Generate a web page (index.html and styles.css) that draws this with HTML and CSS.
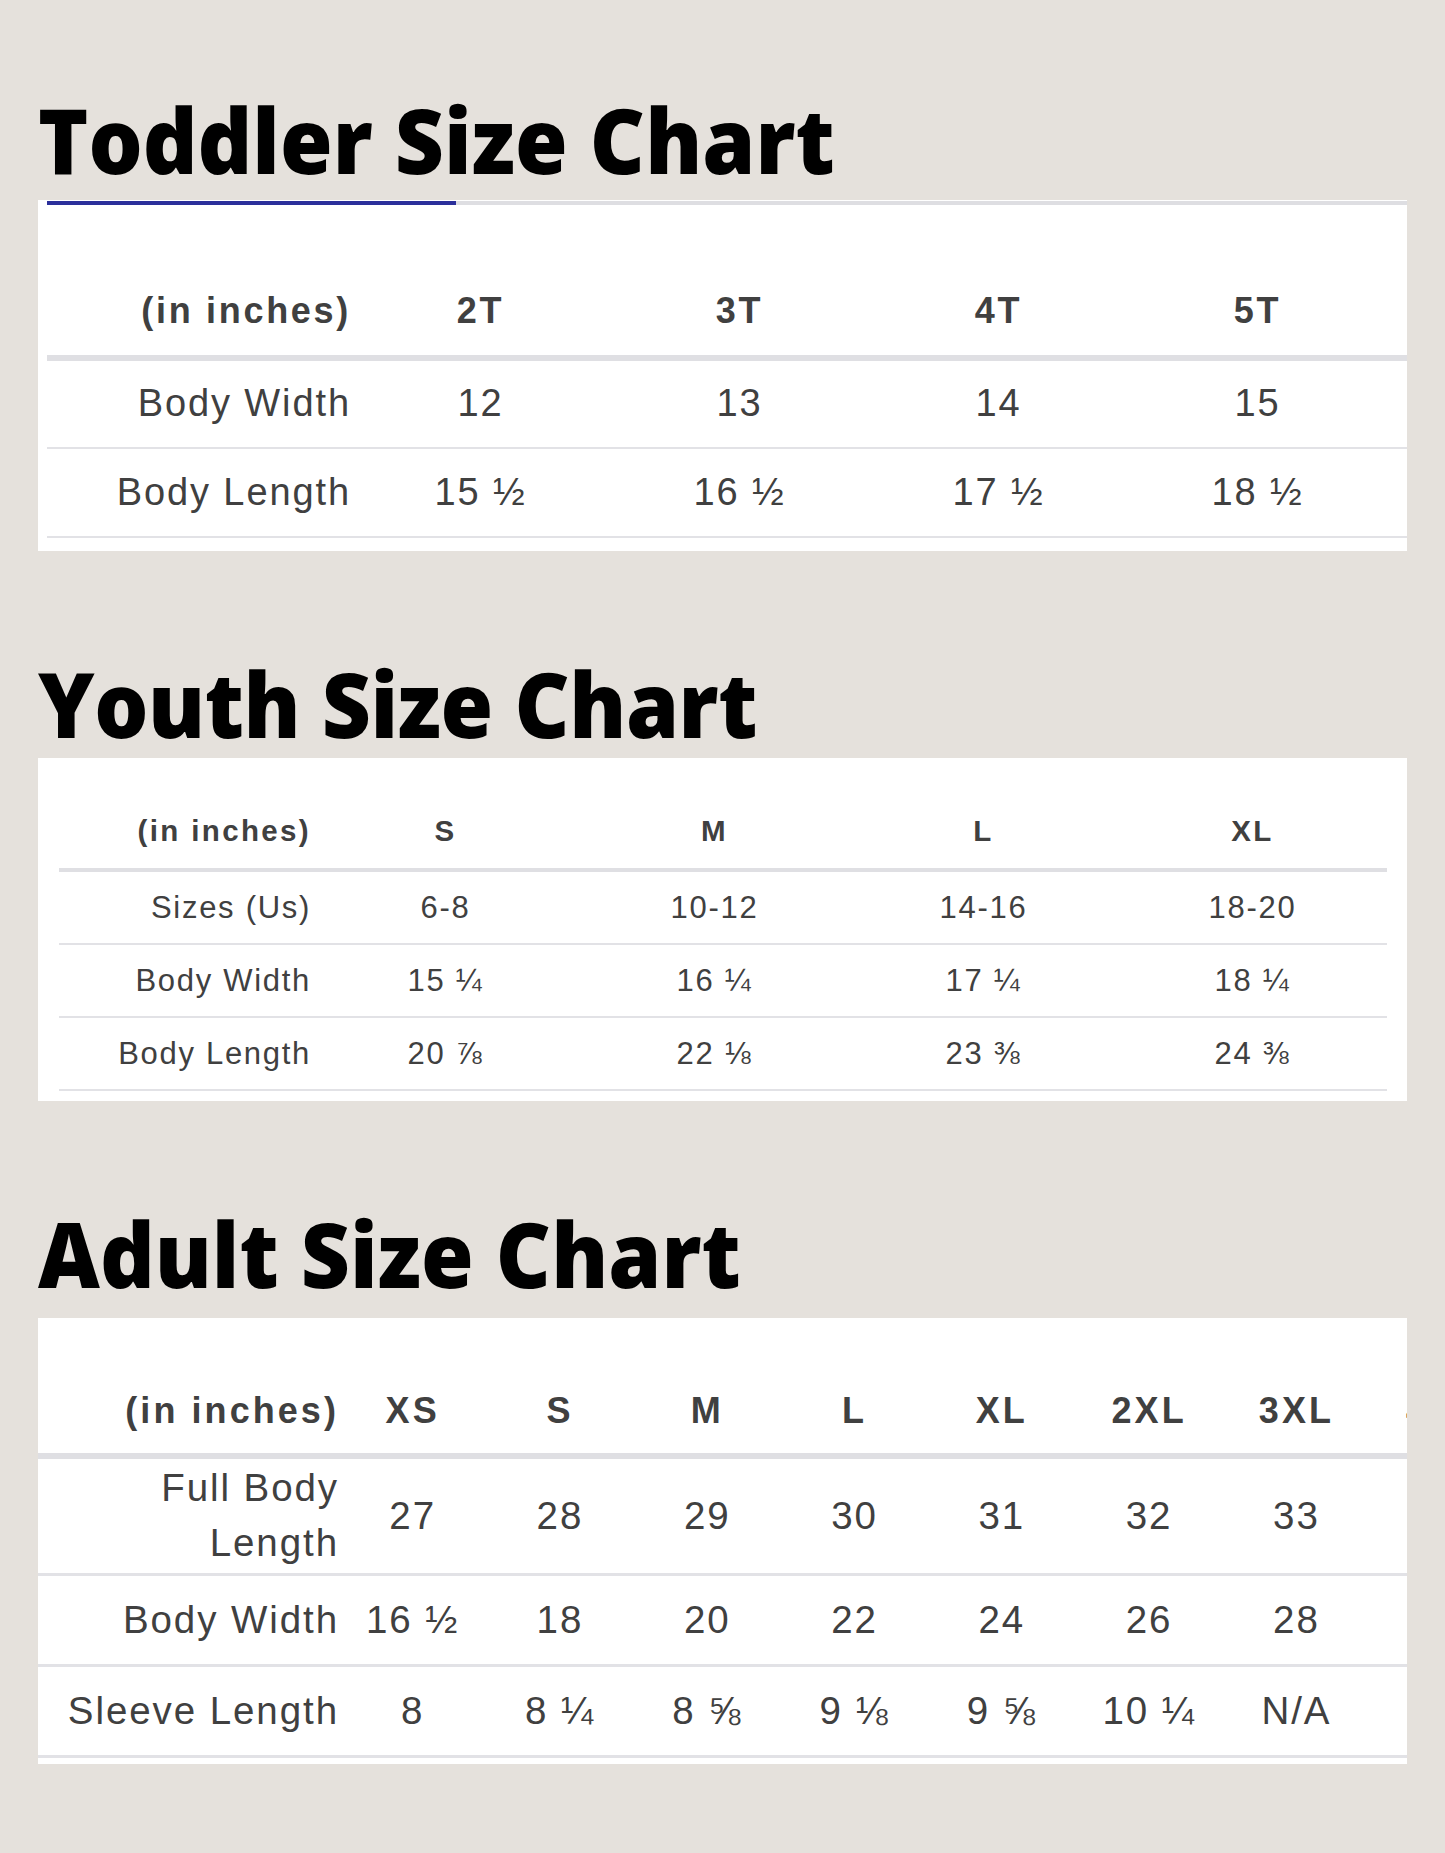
FILE: index.html
```html
<!DOCTYPE html>
<html lang="en">
<head>
<meta charset="utf-8">
<title>Size Charts</title>
<link rel="stylesheet" href="styles.css">
</head>
<body>
<div class="page">
  <section class="chart toddler">
    <h1 class="title">Toddler Size Chart</h1>
    <div class="panel">
      <div class="tabline"><span class="tab-active"></span></div>
      <div class="table">
        <div class="row head">
          <div class="cell label">(in inches)</div>
          <div class="cell">2T</div><div class="cell">3T</div><div class="cell">4T</div><div class="cell">5T</div><div class="cell"></div>
        </div>
        <div class="row r1">
          <div class="cell label">Body Width</div>
          <div class="cell">12</div><div class="cell">13</div><div class="cell">14</div><div class="cell">15</div><div class="cell"></div>
        </div>
        <div class="row r2">
          <div class="cell label">Body Length</div>
          <div class="cell">15 ½</div><div class="cell">16 ½</div><div class="cell">17 ½</div><div class="cell">18 ½</div><div class="cell"></div>
        </div>
      </div>
    </div>
  </section>

  <section class="chart youth">
    <h1 class="title">Youth Size Chart</h1>
    <div class="panel">
      <div class="table">
        <div class="row head">
          <div class="cell label">(in inches)</div>
          <div class="cell">S</div><div class="cell">M</div><div class="cell">L</div><div class="cell">XL</div>
        </div>
        <div class="row">
          <div class="cell label">Sizes (Us)</div>
          <div class="cell">6-8</div><div class="cell">10-12</div><div class="cell">14-16</div><div class="cell">18-20</div>
        </div>
        <div class="row">
          <div class="cell label">Body Width</div>
          <div class="cell">15 ¼</div><div class="cell">16 ¼</div><div class="cell">17 ¼</div><div class="cell">18 ¼</div>
        </div>
        <div class="row">
          <div class="cell label">Body Length</div>
          <div class="cell">20 ⅞</div><div class="cell">22 ⅛</div><div class="cell">23 ⅜</div><div class="cell">24 ⅜</div>
        </div>
      </div>
    </div>
  </section>

  <section class="chart adult">
    <h1 class="title">Adult Size Chart</h1>
    <div class="panel">
      <div class="table">
        <div class="row head">
          <div class="cell label">(in inches)</div>
          <div class="cell">XS</div><div class="cell">S</div><div class="cell">M</div><div class="cell">L</div><div class="cell">XL</div><div class="cell">2XL</div><div class="cell">3XL</div><div class="cell">4XL</div>
        </div>
        <div class="row r1">
          <div class="cell label">Full Body Length</div>
          <div class="cell">27</div><div class="cell">28</div><div class="cell">29</div><div class="cell">30</div><div class="cell">31</div><div class="cell">32</div><div class="cell">33</div><div class="cell"></div>
        </div>
        <div class="row r2">
          <div class="cell label">Body Width</div>
          <div class="cell">16 ½</div><div class="cell">18</div><div class="cell">20</div><div class="cell">22</div><div class="cell">24</div><div class="cell">26</div><div class="cell">28</div><div class="cell"></div>
        </div>
        <div class="row r3">
          <div class="cell label">Sleeve Length</div>
          <div class="cell">8</div><div class="cell">8 ¼</div><div class="cell">8 ⅝</div><div class="cell">9 ⅛</div><div class="cell">9 ⅝</div><div class="cell">10 ¼</div><div class="cell">N/A</div><div class="cell"></div>
        </div>
      </div>
    </div>
  </section>
</div>
</body>
</html>
```

FILE: styles.css
```css
* { box-sizing: border-box; }

html, body {
  margin: 0;
  padding: 0;
  background: #e5e1dc;
}

.page {
  width: 1445px;
  min-height: 1853px;
  padding: 89px 38px 0 38px;
}

.title {
  margin: 0;
  font-family: "Open Sans", "Liberation Sans", sans-serif;
  font-weight: 800;
  font-stretch: 90%;
  font-size: 91px;
  line-height: 100px;
  color: #000;
  letter-spacing: 0;
  white-space: nowrap;
  transform: scaleX(0.937);
  transform-origin: left center;
}

.youth .title { letter-spacing: -0.5px; }

.panel {
  background: #ffffff;
  width: 1369px;
  overflow: hidden;
}

.table {
  font-family: "Liberation Sans", Arial, sans-serif;
  color: #404040;
}

.row {
  display: grid;
  align-items: center;
  border-bottom: 2px solid #e2e2e6;
}

.cell {
  text-align: center;
  white-space: nowrap;
  letter-spacing: 0.05em;
}

.cell.label {
  text-align: right;
  white-space: normal;
}

.row.head {
  font-weight: 700;
  border-bottom-color: #dfdfe3;
}

.row.head .cell {
  letter-spacing: 0.075em;
}

/* ---------- Toddler ---------- */
.toddler .title { margin-bottom: 11px; }

.toddler .panel {
  padding: 1px 0 13px 9px;
}

.tabline {
  height: 4px;
  background: #dedee2;
  display: flex;
}

.tab-active {
  width: 409px;
  background: #2b2f9b;
}

.toddler .row {
  grid-template-columns: 304px repeat(4, 259px) 1fr;
  font-size: 38px;
  line-height: 1.15;
  height: 88px;
}

.toddler .row.head {
  height: 156px;
  padding-top: 62px;
  font-size: 36px;
  border-bottom-width: 6px;
}

.toddler .row.r1 { height: 88px; }
.toddler .row.r2 { height: 89px; }

/* ---------- Youth ---------- */
.youth { margin-top: 102px; }
.youth .title { margin-bottom: 5px; }

.youth .panel {
  padding: 0 20px 10px 21px;
}

.youth .row {
  grid-template-columns: 252px repeat(4, 269px);
  font-size: 31px;
  line-height: 1.15;
  height: 73px;
}

.youth .row .cell { letter-spacing: 0.055em; }

.youth .row.head {
  height: 114px;
  padding-top: 36px;
  font-size: 29.5px;
  border-bottom-width: 4px;
}

.youth .row.head .cell { letter-spacing: 0.08em; }

/* ---------- Adult ---------- */
.adult { margin-top: 102px; }
.adult .title { margin-bottom: 15px; }

.adult .panel {
  padding: 0 0 6px 0;
}

.adult .table { width: 1530px; }

.adult .row {
  grid-template-columns: 301px repeat(8, 147.3px);
  font-size: 38.5px;
  line-height: 1.42;
  border-bottom-width: 3px;
}

.adult .row.head {
  height: 141px;
  padding-top: 50px;
  font-size: 36px;
  line-height: 1.15;
  border-bottom-width: 6px;
}

.adult .row.head .cell { letter-spacing: 0.085em; }

.adult .row.r1 { height: 117px; }
.adult .row.r2 { height: 91px; }
.adult .row.r3 { height: 91px; }
```
